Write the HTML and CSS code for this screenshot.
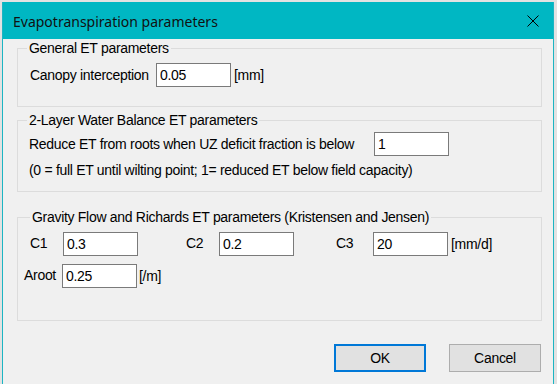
FILE: index.html
```html
<!DOCTYPE html>
<html lang="en">
<head>
    <meta charset="UTF-8">
    <meta name="viewport" content="width=device-width, initial-scale=1.0">
    <title>Evapotranspiration parameters</title>
    <link rel="stylesheet" href="styles.css">
</head>
<body>
    <div class="window">
        <div class="titlebar">
            <span class="title">Evapotranspiration parameters</span>
            <span class="close">
                <svg width="12" height="12" viewBox="0 0 12 12">
                    <path d="M0.5 0.5 L11.5 11.5 M11.5 0.5 L0.5 11.5" stroke="#000" stroke-width="1" fill="none"/>
                </svg>
            </span>
        </div>

        <div class="client">
            <fieldset class="group group-general">
                <legend>General ET parameters</legend>
                <div class="row">
                    <span class="lbl lbl-canopy">Canopy interception</span>
                    <input class="field" type="text" value="0.05">
                    <span class="unit">[mm]</span>
                </div>
            </fieldset>

            <fieldset class="group group-layer">
                <legend>2-Layer Water Balance ET parameters</legend>
                <div class="row">
                    <span class="lbl lbl-reduce">Reduce ET from roots when UZ deficit fraction is below</span>
                    <input class="field" type="text" value="1">
                </div>
                <div class="note">(0 = full ET until wilting point; 1= reduced ET below field capacity)</div>
            </fieldset>

            <fieldset class="group group-gravity">
                <legend>Gravity Flow and Richards ET parameters (Kristensen and Jensen)</legend>
                <div class="row row-c">
                    <span class="lbl lbl-c1">C1</span>
                    <input class="field" type="text" value="0.3">
                    <span class="lbl lbl-c2">C2</span>
                    <input class="field" type="text" value="0.2">
                    <span class="lbl lbl-c3">C3</span>
                    <input class="field" type="text" value="20">
                    <span class="unit">[mm/d]</span>
                </div>
                <div class="row row-aroot">
                    <span class="lbl lbl-aroot">Aroot</span>
                    <input class="field field-aroot" type="text" value="0.25">
                    <span class="unit unit-m">[/m]</span>
                </div>
            </fieldset>

            <div class="buttons">
                <button class="btn btn-default">OK</button>
                <button class="btn">Cancel</button>
            </div>
        </div>
    </div>
</body>
</html>
```

FILE: styles.css
```css
body {
    margin: 0;
    background-color: #e2e2e2;
    font-family: "Liberation Sans", Arial, sans-serif;
    font-size: 14px;
    letter-spacing: -0.3px;
    color: #000;
}
.window {
    margin: 2px 0 0 2px;
    width: 550px;
    height: 382px;
    border-left: 1px solid #1cb5c3;
    border-right: 1px solid #1cb5c3;
    background-color: #f0f0f0;
}
.titlebar {
    display: flex;
    align-items: center;
    justify-content: space-between;
    height: 37px;
    padding: 0 14px 0 10px;
    background-color: #00b7c3;
    letter-spacing: 0;
}
.title {
    font-family: "Noto Sans", "Open Sans", sans-serif;
    font-size: 14px;
    color: #111;
    padding-top: 2px;
}
.close {
    display: flex;
    width: 12px;
    height: 12px;
    margin-top: 1px;
}
.client {
    padding: 2px 11px 0 14px;
}
.group {
    margin: 0;
    padding: 0;
    border: 1px solid #dcdcdc;
    min-width: 0;
}
.group legend {
    padding: 0 2px;
    margin-left: 9px;
    line-height: 15px;
}
.group-general {
    padding: 7px 0 19px 0;
}
.group-layer {
    margin-top: 6px;
    padding: 4px 0 13px 0;
}
.group-gravity {
    margin-top: 18px;
    padding: 7px 0 32px 0;
}
.group-gravity legend {
    margin-left: 12px;
}
.row {
    display: flex;
    align-items: center;
    height: 24px;
}
.lbl {
    flex-shrink: 0;
    white-space: nowrap;
}
.field {
    box-sizing: border-box;
    width: 75px;
    height: 24px;
    margin: 0;
    padding: 0 3px;
    border: 1px solid #7a7a7a;
    background-color: #fff;
    font-family: inherit;
    font-size: 14px;
    letter-spacing: -0.3px;
    color: #000;
    outline: none;
}
.unit {
    margin-left: 3px;
}
.lbl-canopy {
    margin-left: 12px;
    width: 126px;
}
.lbl-reduce {
    margin-left: 11px;
    width: 345px;
}
.note {
    margin: 7px 0 0 11px;
    line-height: 15px;
}
.row-c .lbl {
    margin-top: -3px;
}
.lbl-c1 {
    margin-left: 12px;
    width: 33px;
}
.lbl-c2 {
    margin-left: 48px;
    width: 33px;
}
.lbl-c3 {
    margin-left: 42px;
    width: 37px;
}
.row-aroot {
    margin-top: 8px;
}
.lbl-aroot {
    margin-left: 6px;
    width: 38px;
    margin-top: -3px;
}
.unit-m {
    margin-left: 2px;
}
.buttons {
    display: flex;
    justify-content: flex-end;
    gap: 23px;
    margin-top: 23px;
    padding-right: 1px;
}
.btn {
    box-sizing: border-box;
    width: 92px;
    height: 28px;
    padding: 0;
    border: 1px solid #adadad;
    background-color: #e1e1e1;
    font-family: inherit;
    font-size: 14px;
    letter-spacing: -0.3px;
    color: #000;
}
.btn-default {
    border: 2px solid #0078d7;
}
```
